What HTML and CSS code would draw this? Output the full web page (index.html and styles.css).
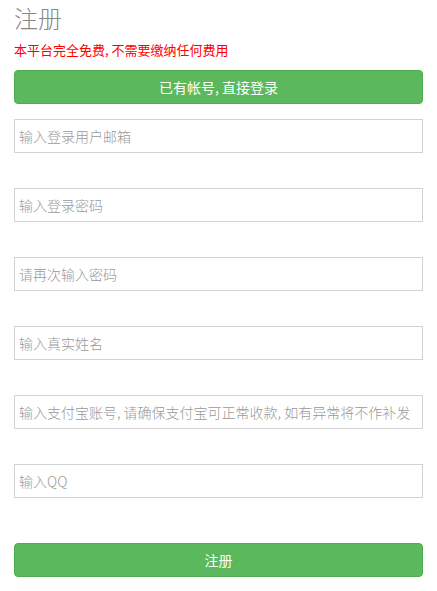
FILE: index.html
```html
<!DOCTYPE html>
<html lang="zh-CN">
<head>
<meta charset="utf-8">
<title>注册</title>
<link rel="stylesheet" href="styles.css">
</head>
<body>
<div class="page">
  <h1 class="title">注册</h1>
  <p class="notice">本平台完全免费, 不需要缴纳任何费用</p>
  <button class="btn btn-login" type="button">已有帐号, 直接登录</button>
  <form class="form">
    <input class="field field-first" type="text" placeholder="输入登录用户邮箱">
    <input class="field" type="password" placeholder="输入登录密码">
    <input class="field" type="password" placeholder="请再次输入密码">
    <input class="field" type="text" placeholder="输入真实姓名">
    <input class="field" type="text" placeholder="输入支付宝账号, 请确保支付宝可正常收款, 如有异常将不作补发">
    <input class="field" type="text" placeholder="输入QQ">
    <button class="btn btn-submit" type="button">注册</button>
  </form>
</div>
</body>
</html>
```

FILE: styles.css
```css
* {
  box-sizing: border-box;
}

html, body {
  margin: 0;
  padding: 0;
  background: #fff;
}

body {
  font-family: "Noto Sans CJK SC", "Noto Sans", "Liberation Sans", sans-serif;
  font-weight: 300;
}

.page {
  display: flex;
  flex-direction: column;
  padding: 2px 14px 0;
}

.title {
  margin: 0;
  font-size: 24px;
  line-height: 32px;
  font-weight: 300;
  color: #888;
}

.notice {
  margin: 6px 0 0;
  font-size: 13px;
  line-height: 20px;
  font-weight: 400;
  color: #f00;
}

.btn {
  display: block;
  width: 100%;
  height: 34px;
  margin: 0;
  padding: 0;
  border: 1px solid #4cae4c;
  border-radius: 4px;
  background: #5cb85c;
  color: #fff;
  font-family: inherit;
  font-size: 14px;
  font-weight: 400;
  line-height: 32px;
  text-align: center;
}

.btn-login {
  margin-top: 10px;
}

.form {
  display: flex;
  flex-direction: column;
  margin: 0;
}

.field {
  display: block;
  width: 100%;
  height: 34px;
  margin: 35px 0 0;
  padding: 0 4px;
  border: 1px solid #d3d3d3;
  border-radius: 0;
  background: #fff;
  font-family: inherit;
  font-size: 14px;
  font-weight: 300;
  color: #555;
  outline: none;
}

.field-first {
  margin-top: 15px;
}

.field::placeholder {
  color: #999;
}

.btn-submit {
  margin-top: 45px;
}
```
